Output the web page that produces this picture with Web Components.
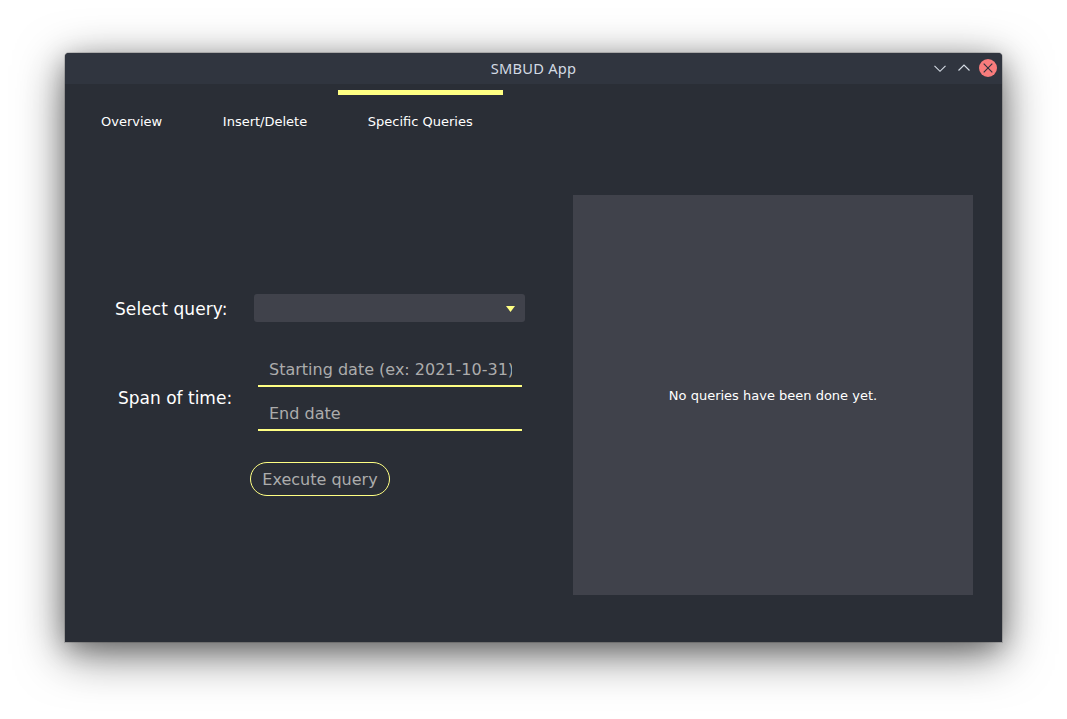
<!DOCTYPE html>
<html lang="en">
<head>
<meta charset="utf-8">
<title>SMBUD App</title>
<style>
html, body { margin: 0; width: 1067px; height: 719px; overflow: hidden; background: #fff; }
body { font-family: "DejaVu Sans", sans-serif; color: #fff; }
</style>
</head>
<body>
<smbud-window></smbud-window>
<script>
const define = (name, html) => customElements.define(name, class extends HTMLElement {
  constructor() {
    super();
    const t = document.createElement('template');
    t.innerHTML = html;
    this.attachShadow({ mode: 'open' }).append(t.content.cloneNode(true));
  }
});

define('title-bar', `
<style>
:host { display: grid; grid-template-columns: 1fr auto 1fr; align-items: center; height: 31px; background: #30353f;
  font: 14.67px/20px "Noto Sans", sans-serif; color: #d3dae3; }
.t { grid-column: 2; padding-bottom: 1px; letter-spacing: .2px; }
.c { justify-self: end; display: flex; gap: 6px; padding: 0 5px 1px 0; }
svg { display: block; width: 18px; height: 18px; fill: none; stroke: #d3dae3; stroke-width: 1.15; }
</style>
<span class="t"><slot></slot></span>
<span class="c">
<svg viewBox="0 0 18 18"><path d="M3.500 6.800 9 12.300l5.500-5.500"/></svg>
<svg viewBox="0 0 18 18"><path d="M3.500 11.500 9 6l5.500 5.500"/></svg>
<svg viewBox="0 0 18 18"><circle cx="9" cy="9" r="9" fill="#f87c7c" stroke="none"/><path d="m4.700 4.700 8.600 8.600m0-8.600-8.600 8.600" stroke="#31343f"/></svg>
</span>`);

define('nav-tab', `
<style>
:host { display: block; box-sizing: border-box; border-top: 5px solid transparent; padding: 19px 30px 0; font-size: 13px; line-height: 16px; white-space: nowrap; }
:host([active]) { border-top-color: #ffff83; }
</style><slot></slot>`);

define('tab-bar', `
<style>:host { display: flex; gap: .6px; box-sizing: border-box; padding: 6px 6px 0; height: 51px; }</style><slot></slot>`);

define('query-select', `
<style>
:host { display: flex; align-items: center; justify-content: flex-end; box-sizing: border-box; width: 271px; height: 28px; padding: 1px 10px 0 0; border-radius: 3px; background: #40424b; }
svg { display: block; width: 9px; height: 6px; }
</style><svg viewBox="0 0 9 6"><path d="M0 0h9L4.500 6z" fill="#ffff83"/></svg>`);

define('date-field', `
<style>
:host { display: block; box-sizing: border-box; width: 264px; height: 34px; padding: 7px 10px 0 11px; border-bottom: 2px solid #ffff83; color: #acacac; font-size: 16px; line-height: 20px; }
div { overflow: hidden; white-space: nowrap; }
</style><div><slot></slot></div>`);

define('pill-button', `
<style>
:host { display: flex; align-items: center; justify-content: center; box-sizing: border-box; width: 140px; height: 34px; padding-top: 2px; border: 1px solid #ffff83; border-radius: 17px; color: #acacac; font-size: 16px; line-height: 20px; white-space: nowrap; }
</style><slot></slot>`);

define('result-panel', `
<style>
:host { display: flex; align-items: center; justify-content: center; width: 400px; height: 400px; background: #40424b; font-size: 13px; line-height: 16px; }
span { padding-top: 1px; }
</style><span><slot></slot></span>`);

define('query-form', `
<style>
:host { display: grid; grid-template-columns: 185px auto; align-content: start; width: 508px; font-size: 17px; line-height: 20px; white-space: nowrap; }
.l { align-self: center; padding: 2px 0 0 50px; letter-spacing: .08px; }
.l.s { padding: 11px 0 0 53px; letter-spacing: 0; }
.select { margin-left: 4px; }
.dates { display: grid; gap: 10px; margin: 31px 0 31px 8px; }
pill-button { grid-column: 2; }
</style>
<span class="l">Select query:</span><query-select class="select"></query-select>
<span class="l s">Span of time:</span>
<div class="dates"><date-field>Starting date (ex: 2021-10-31)</date-field><date-field>End date</date-field></div>
<pill-button>Execute query</pill-button>`);

define('smbud-window', `
<style>
:host { display: block; padding: 53px 65px 77px; }
section { width: 937px; height: 589px; overflow: hidden; background: #2a2e36; border-radius: 4px 4px 0 0;
  box-shadow: 0 0 0 1px rgba(0,0,0,.15), 0 12px 48px rgba(0,0,0,.55), 0 7px 24px rgba(0,0,0,.25); }
main { display: flex; padding-top: 60px; }
query-form { padding-top: 99px; }
</style>
<section>
<title-bar>SMBUD App</title-bar>
<tab-bar><nav-tab>Overview</nav-tab><nav-tab>Insert/Delete</nav-tab><nav-tab active>Specific Queries</nav-tab></tab-bar>
<main><query-form></query-form><result-panel>No queries have been done yet.</result-panel></main>
</section>`);
</script>
</body>
</html>
